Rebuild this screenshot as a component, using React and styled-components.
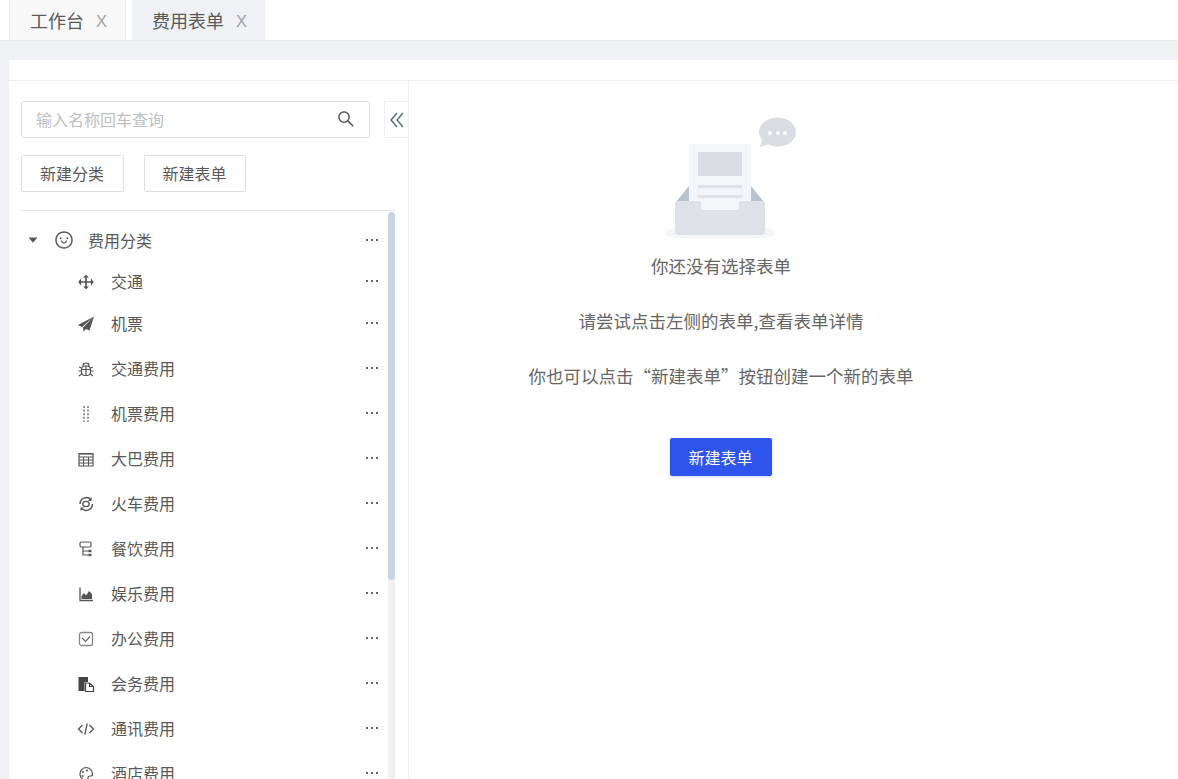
import React from "react";
import styled, { createGlobalStyle } from "styled-components";
import { AiOutlineSearch, AiOutlineSmile, AiFillCaretDown } from "react-icons/ai";

const GlobalStyle = createGlobalStyle`
  html, body {
    margin: 0;
    height: 100%;
    overflow: hidden;
    background: #fff;
  }
  body {
    font-family: "Noto Sans CJK SC", "Liberation Sans", sans-serif;
    color: #595959;
  }
  * {
    box-sizing: border-box;
  }
`;

const Page = styled.div`
  height: 779px;
  display: flex;
  flex-direction: column;
  background: #eff1f5;
  overflow: hidden;
`;

const TabBar = styled.div`
  height: 41px;
  flex: none;
  display: flex;
  gap: 6px;
  padding-left: 9px;
  background: #fff;
  border-bottom: 1px solid #e8eaee;
`;

const Tab = styled.div`
  height: 40px;
  display: flex;
  align-items: center;
  font-size: 18px;
  padding-bottom: 1px;
  padding-left: 20px;
  background: ${(p) => (p.$active ? "#eff1f5" : "#f8f8f9")};
  border: ${(p) => (p.$active ? "none" : "1px solid #eceef1")};
  border-width: 0 1px;
  width: ${(p) => (p.$active ? "133px" : "117px")};
`;

const TabClose = styled.span`
  margin: 3px 0 0 12px;
  font-family: "Liberation Sans", sans-serif;
  font-size: 16.5px;
  color: #a3a3a3;
`;

const Panel = styled.div`
  flex: 1;
  min-height: 0;
  margin: 19px 0 0 9px;
  background: #fff;
  display: flex;
  flex-direction: column;
`;

const PanelHead = styled.div`
  height: 21px;
  flex: none;
  border-bottom: 1px solid #eceef1;
`;

const Body = styled.div`
  flex: 1;
  min-height: 0;
  display: flex;
`;

const Sidebar = styled.aside`
  width: 400px;
  flex: none;
  border-right: 1px solid #eceef1;
  padding: 20px 0 0 12px;
  display: flex;
  flex-direction: column;
  min-height: 0;
`;

const SearchRow = styled.div`
  display: flex;
  gap: 14px;
`;

const SearchBox = styled.div`
  width: 350px;
  height: 37px;
  border: 1px solid #dcdfe4;
  border-radius: 3px;
  display: flex;
  align-items: center;
  justify-content: space-between;
  padding: 0 13px 2px 14px;
  font-size: 16px;
  color: #c0c0c0;
  svg {
    color: #595959;
    font-size: 20px;
  }
`;

const Collapse = styled.div`
  width: 24px;
  height: 37px;
  border: 1px solid #eceef1;
  border-right: none;
  display: flex;
  align-items: center;
  justify-content: center;
`;

const Actions = styled.div`
  display: flex;
  gap: 20px;
  margin-top: 17px;
  padding-bottom: 18px;
  width: 374px;
  border-bottom: 1px solid #e4e6ea;
`;

const OutlineButton = styled.button`
  height: 37px;
  width: ${(p) => p.$width}px;
  padding: 0 1px 1px 0;
  background: #fff;
  border: 1px solid #dcdfe4;
  border-radius: 2px;
  font: inherit;
  font-size: 16px;
  color: #595959;
`;

const TreeArea = styled.div`
  flex: 1;
  min-height: 0;
  width: 374px;
  position: relative;
  overflow: hidden;
  padding-top: 7px;
`;

const Scrollbar = styled.div`
  position: absolute;
  top: 1px;
  right: 0;
  bottom: 0;
  width: 7px;
  background: #f1f1f1;
  border-radius: 4px 4px 0 0;
`;

const ScrollThumb = styled.div`
  height: 368px;
  background: #c9d4e5;
  border-radius: 4px;
`;

const Row = styled.div`
  height: ${(p) => p.$height || 45}px;
  display: flex;
  align-items: center;
  padding-right: 16px;
  font-size: 16px;
  padding-left: ${(p) => (p.$root ? "6px" : "56px")};
`;

const Caret = styled.span`
  width: 12px;
  display: flex;
  font-size: 12px;
  color: #595959;
`;

const RootIcon = styled.span`
  display: flex;
  margin-left: 15px;
  width: 34px;
  font-size: 20px;
  color: #595959;
`;

const ItemIcon = styled.span`
  width: 18px;
  margin-right: 16px;
  display: flex;
  justify-content: center;
  margin-top: 2px;
`;

const Glyph = styled.svg`
  display: block;
  width: 18px;
  height: 18px;
  fill: none;
  stroke: #555;
  stroke-width: 1.2;
`;

const Label = styled.span`
  flex: 1;
`;

const Dots = styled.span`
  display: flex;
  gap: 3px;
  margin-right: 1px;
`;

const Dot = styled.i`
  width: 2px;
  height: 2px;
  background: #666;
`;

const Main = styled.main`
  flex: 1;
  display: flex;
  flex-direction: column;
  align-items: center;
  padding: 35px 145px 0 0;
`;

const Line = styled.p`
  margin: 0;
  height: 55px;
  line-height: 55px;
  font-size: 17.5px;
  color: #666;
  white-space: nowrap;
`;

const PrimaryButton = styled.button`
  margin-top: 35px;
  width: 102px;
  height: 38px;
  padding: 0 1px 1px 0;
  border: none;
  border-radius: 2px;
  background: #2f54eb;
  color: #fff;
  font: inherit;
  font-size: 16px;
  box-shadow: 0 1px 3px rgba(47, 84, 235, 0.25);
`;

const Illustration = styled.svg`
  display: block;
  width: 140px;
  height: 122px;
  margin-left: 16px;
`;

const EmptyIllustration = () => (
  <Illustration viewBox="660 116 140 122">
    <ellipse cx="721" cy="233" rx="55" ry="9" fill="#f4f5f7" />
    <path d="M677 202 L690 186 L752 186 L765 202 Z" fill="#b9c3cd" />
    <rect x="690" y="144" width="62" height="66" fill="#f4f5f8" />
    <rect x="699" y="152" width="44" height="24" fill="#dadde3" />
    <rect x="699" y="185" width="44" height="3" fill="#dfe2e7" />
    <rect x="699" y="195" width="44" height="3" fill="#dfe2e7" />
    <path
      d="M676 204 a3 3 0 0 1 3-3 h21 q2 0 2 2 v4 q0 3 3 3 h32 q3 0 3-3 v-4 q0-2 2-2 h21 a3 3 0 0 1 3 3 v27 a4 4 0 0 1-4 4 h-82 a4 4 0 0 1-4-4 Z"
      fill="#dee1e8"
    />
    <path d="M760 132 a18.500 14.500 0 1 1 9 12.500 L761 147 L763 140 a14 14 0 0 1-3-8 Z" fill="#d9dce3" />
    <circle cx="771" cy="133" r="2" fill="#fff" />
    <circle cx="779" cy="133" r="2" fill="#fff" />
    <circle cx="786" cy="133" r="2" fill="#fff" />
  </Illustration>
);

const DoubleChevron = () => (
  <svg width="16" height="18" viewBox="0 0 16 18" fill="none" stroke="#5a6a85" strokeWidth="1.5">
    <path d="M8 2 L2 9 L8 16" />
    <path d="M14 2 L8 9 L14 16" />
  </svg>
);

const DragIcon = () => (
  <Glyph viewBox="0 0 18 18">
    <path d="M3 9 H15 M9 4 V14" strokeWidth="1.7" />
    <path d="M3.500 7 L2 9 L3.500 11 Z M14.500 7 L16 9 L14.500 11 Z M7.500 4 L9 2.500 L10.500 4 Z M7.500 14 L9 15.500 L10.500 14 Z" fill="#555" />
  </Glyph>
);

const PlaneIcon = () => (
  <Glyph viewBox="0 0 18 18">
    <path d="M17 1.500 L1 10 L5 12 Z M17 1.500 L6 12.500 L6.500 16.500 L9 14 L12.500 15.500 Z" fill="#555" stroke="none" />
  </Glyph>
);

const BugIcon = () => (
  <Glyph viewBox="0 0 18 18">
    <path d="M6 6 a3 3 0 0 1 6 0" />
    <rect x="4.500" y="6" width="9" height="9.500" rx="3.500" />
    <path d="M4.500 9.500 H13.500 M9 6 V15.500 M2 7 L4.500 8 M16 7 L13.500 8 M1.500 11 H4.500 M16.500 11 H13.500 M2 16 L5 13.500 M16 16 L13 13.500 M6 3 L7 4.500 M12 3 L11 4.500" />
  </Glyph>
);

const HolderIcon = () => (
  <Glyph viewBox="0 0 18 18" strokeDasharray="2 1.600">
    <path d="M7 1 V17 M11 1 V17" stroke="#666" strokeWidth="1.400" />
  </Glyph>
);

const TableIcon = () => (
  <Glyph viewBox="0 0 18 18">
    <path d="M2 3.500 H16 V16 H2 Z M2 7 H16" />
    <path d="M2 10 H16 M2 13 H16 M6.500 7 V16 M11.500 7 V16" strokeWidth="1" />
    <path d="M2 4 H16" strokeWidth="1.200" />
  </Glyph>
);

const EyeSyncIcon = () => (
  <Glyph viewBox="0 0 18 18">
    <path d="M3 9 a6.500 6.500 0 0 1 11-4.500" strokeWidth="1.500" />
    <path d="M15.500 9 a6.500 6.500 0 0 1-11 4.500" strokeWidth="1.500" />
    <path d="M14.500 2 V6 H11 Z M3.500 16 V12.500 H7 Z" fill="#555" stroke="none" />
    <ellipse cx="9" cy="9" rx="3.200" ry="2.600" strokeWidth="1.300" />
  </Glyph>
);

const TreeIcon = () => (
  <Glyph viewBox="0 0 18 18">
    <rect x="3" y="2" width="11" height="5" rx="1.500" />
    <path d="M6 7 V15 H12 M6 11 H12" />
    <rect x="11.500" y="9.800" width="3" height="2.400" fill="#555" stroke="none" />
    <rect x="11.500" y="13.800" width="3" height="2.400" fill="#555" stroke="none" />
  </Glyph>
);

const AreaIcon = () => (
  <Glyph viewBox="0 0 18 18">
    <path d="M3 2.500 V15.500 H16" strokeWidth="1.300" />
    <path d="M4.500 14 V11 L7 8 L9 10.500 L12 6 L15 9 V14 Z" fill="#555" stroke="none" />
  </Glyph>
);

const CheckIcon = () => (
  <Glyph viewBox="0 0 18 18">
    <rect x="2.500" y="2.500" width="13" height="13" rx="2" stroke="#888" strokeWidth="1.300" />
    <path d="M5 8 L8.500 11.500 L13 6.500" stroke="#666" />
  </Glyph>
);

const SnippetIcon = () => (
  <Glyph viewBox="0 0 18 18">
    <path d="M1.500 2 H11 V7 H7.500 V16 H1.500 Z" fill="#444" stroke="none" />
    <path d="M8.500 8 H12.500 L16.500 11.500 V16.500 H8.500 Z M12.500 8 V11.500 H16.500" fill="#fff" stroke="#444" strokeWidth="1.200" />
  </Glyph>
);

const CodeIcon = () => (
  <Glyph viewBox="0 0 18 18">
    <path d="M5.500 5 L1.500 9 L5.500 13 M12.500 5 L16.500 9 L12.500 13 M10.200 3.500 L7.800 14.500" strokeWidth="1.300" />
  </Glyph>
);

const PaletteIcon = () => (
  <Glyph viewBox="0 0 18 18">
    <path d="M9 2.500 a6.500 6.500 0 1 0 1 13 c1.500 0 1-2 1-3 s1-1.500 2.500-1.500 s2-1 2-2 a6.500 6.500 0 0 0-6.500-6.500 Z" />
    <circle cx="6" cy="7" r="1" fill="#555" stroke="none" />
    <circle cx="10" cy="5.500" r="1" fill="#555" stroke="none" />
    <circle cx="5.500" cy="11" r="1" fill="#555" stroke="none" />
  </Glyph>
);

const items = [
  { name: "交通", icon: <DragIcon />, height: 39 },
  { name: "机票", icon: <PlaneIcon /> },
  { name: "交通费用", icon: <BugIcon /> },
  { name: "机票费用", icon: <HolderIcon /> },
  { name: "大巴费用", icon: <TableIcon /> },
  { name: "火车费用", icon: <EyeSyncIcon /> },
  { name: "餐饮费用", icon: <TreeIcon /> },
  { name: "娱乐费用", icon: <AreaIcon /> },
  { name: "办公费用", icon: <CheckIcon /> },
  { name: "会务费用", icon: <SnippetIcon /> },
  { name: "通讯费用", icon: <CodeIcon /> },
  { name: "酒店费用", icon: <PaletteIcon /> },
];

const More = () => (
  <Dots>
    <Dot />
    <Dot />
    <Dot />
  </Dots>
);

export default function App() {
  return (
    <Page>
      <GlobalStyle />
      <TabBar>
        <Tab>
          工作台<TabClose>X</TabClose>
        </Tab>
        <Tab $active>
          费用表单<TabClose>X</TabClose>
        </Tab>
      </TabBar>
      <Panel>
        <PanelHead />
        <Body>
          <Sidebar>
            <SearchRow>
              <SearchBox>
                输入名称回车查询
                <AiOutlineSearch />
              </SearchBox>
              <Collapse>
                <DoubleChevron />
              </Collapse>
            </SearchRow>
            <Actions>
              <OutlineButton $width={103}>新建分类</OutlineButton>
              <OutlineButton $width={102}>新建表单</OutlineButton>
            </Actions>
            <TreeArea>
              <Scrollbar>
                <ScrollThumb />
              </Scrollbar>
              <Row $root $height={43}>
                <Caret>
                  <AiFillCaretDown />
                </Caret>
                <RootIcon>
                  <AiOutlineSmile />
                </RootIcon>
                <Label>费用分类</Label>
                <More />
              </Row>
              {items.map((item) => (
                <Row key={item.name} $height={item.height}>
                  <ItemIcon>{item.icon}</ItemIcon>
                  <Label>{item.name}</Label>
                  <More />
                </Row>
              ))}
            </TreeArea>
          </Sidebar>
          <Main>
            <EmptyIllustration />
            <Line>你还没有选择表单</Line>
            <Line>请尝试点击左侧的表单,查看表单详情</Line>
            <Line>你也可以点击“新建表单”按钮创建一个新的表单</Line>
            <PrimaryButton>新建表单</PrimaryButton>
          </Main>
        </Body>
      </Panel>
    </Page>
  );
}
